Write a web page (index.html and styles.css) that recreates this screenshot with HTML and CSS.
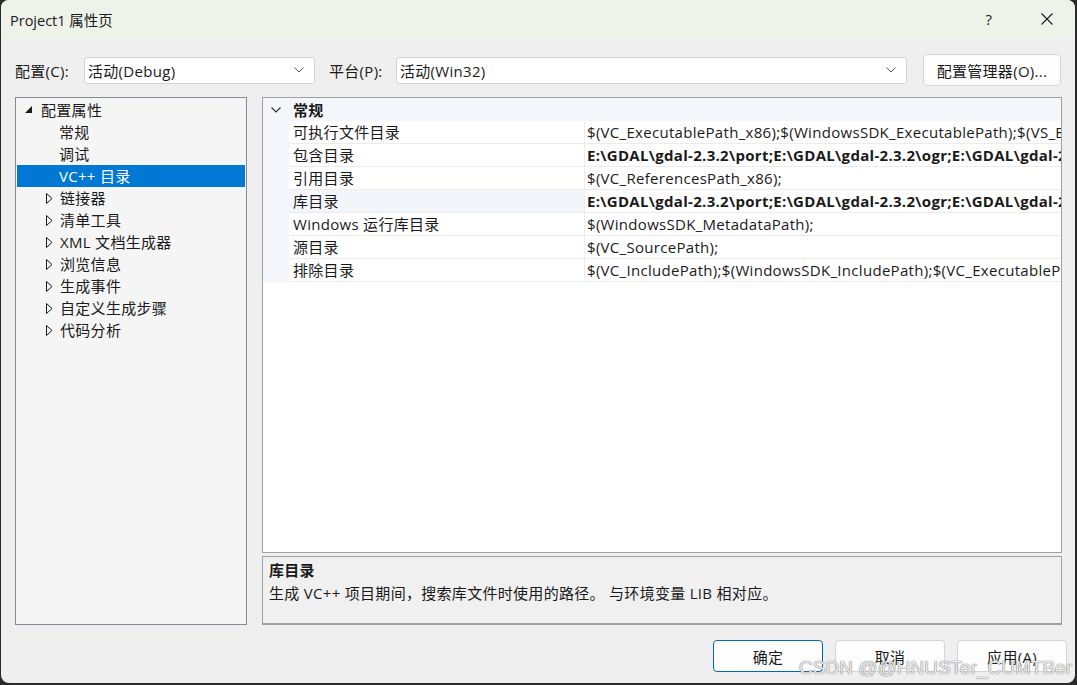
FILE: index.html
```html
<!DOCTYPE html>
<html>
<head>
    <title>Project1 属性页</title>
    <link rel="stylesheet" href="styles.css">
</head>
<body>
    <div class="window">
        <div class="titlebar">
            <span class="title">Project1 属性页</span>
            <span class="caption-btn help">?</span>
            <span class="caption-btn close">
                <svg width="12" height="12" viewBox="0 0 12 12"><path d="M0.5 0.5 L11.5 11.5 M11.5 0.5 L0.5 11.5" stroke="#1a1a1a" stroke-width="1.1" fill="none"/></svg>
            </span>
        </div>

        <div class="toolbar">
            <label class="config-label">配置(C):</label>
            <div class="combo combo-config">
                <span>活动(Debug)</span>
                <svg class="chevron" width="10" height="6" viewBox="0 0 10 6"><path d="M0.5 0.5 L5 5 L9.5 0.5" stroke="#555" stroke-width="1" fill="none"/></svg>
            </div>
            <label class="platform-label">平台(P):</label>
            <div class="combo combo-platform">
                <span>活动(Win32)</span>
                <svg class="chevron" width="10" height="6" viewBox="0 0 10 6"><path d="M0.5 0.5 L5 5 L9.5 0.5" stroke="#555" stroke-width="1" fill="none"/></svg>
            </div>
            <button class="manager-btn">配置管理器(O)...</button>
        </div>

        <div class="main">
            <div class="tree">
                <div class="tree-row root">
                    <svg class="expander" width="8" height="8" viewBox="0 0 8 8"><polygon points="7,0 7,7 0,7" fill="#1a1a1a"/></svg>
                    <span>配置属性</span>
                </div>
                <div class="tree-row leaf"><span>常规</span></div>
                <div class="tree-row leaf"><span>调试</span></div>
                <div class="tree-row leaf selected"><span>VC++ 目录</span></div>
                <div class="tree-row node">
                    <svg class="expander" width="7" height="11" viewBox="0 0 7 11"><polygon points="0.5,0.5 6,5.5 0.5,10.5" fill="none" stroke="#1a1a1a" stroke-width="1"/></svg>
                    <span>链接器</span>
                </div>
                <div class="tree-row node">
                    <svg class="expander" width="7" height="11" viewBox="0 0 7 11"><polygon points="0.5,0.5 6,5.5 0.5,10.5" fill="none" stroke="#1a1a1a" stroke-width="1"/></svg>
                    <span>清单工具</span>
                </div>
                <div class="tree-row node">
                    <svg class="expander" width="7" height="11" viewBox="0 0 7 11"><polygon points="0.5,0.5 6,5.5 0.5,10.5" fill="none" stroke="#1a1a1a" stroke-width="1"/></svg>
                    <span>XML 文档生成器</span>
                </div>
                <div class="tree-row node">
                    <svg class="expander" width="7" height="11" viewBox="0 0 7 11"><polygon points="0.5,0.5 6,5.5 0.5,10.5" fill="none" stroke="#1a1a1a" stroke-width="1"/></svg>
                    <span>浏览信息</span>
                </div>
                <div class="tree-row node">
                    <svg class="expander" width="7" height="11" viewBox="0 0 7 11"><polygon points="0.5,0.5 6,5.5 0.5,10.5" fill="none" stroke="#1a1a1a" stroke-width="1"/></svg>
                    <span>生成事件</span>
                </div>
                <div class="tree-row node">
                    <svg class="expander" width="7" height="11" viewBox="0 0 7 11"><polygon points="0.5,0.5 6,5.5 0.5,10.5" fill="none" stroke="#1a1a1a" stroke-width="1"/></svg>
                    <span>自定义生成步骤</span>
                </div>
                <div class="tree-row node">
                    <svg class="expander" width="7" height="11" viewBox="0 0 7 11"><polygon points="0.5,0.5 6,5.5 0.5,10.5" fill="none" stroke="#1a1a1a" stroke-width="1"/></svg>
                    <span>代码分析</span>
                </div>
            </div>

            <div class="right-pane">
                <div class="grid">
                    <div class="category-row">
                        <span class="gutter">
                            <svg width="10" height="6" viewBox="0 0 10 6"><path d="M0.5 0.5 L5 5 L9.5 0.5" stroke="#333" stroke-width="1.2" fill="none"/></svg>
                        </span>
                        <span class="category-name">常规</span>
                    </div>
                    <div class="prop-row">
                        <span class="gutter"></span>
                        <span class="name">可执行文件目录</span>
                        <span class="value">$(VC_ExecutablePath_x86);$(WindowsSDK_ExecutablePath);$(VS_ExecutablePath);$(MSBuild_ExecutablePath);$(SystemRoot)\SysWow64;$(FxCopDir);$(PATH);</span>
                    </div>
                    <div class="prop-row">
                        <span class="gutter"></span>
                        <span class="name">包含目录</span>
                        <span class="value bold">E:\GDAL\gdal-2.3.2\port;E:\GDAL\gdal-2.3.2\ogr;E:\GDAL\gdal-2.3.2\gcore;E:\GDAL\gdal-2.3.2\alg;$(IncludePath)</span>
                    </div>
                    <div class="prop-row">
                        <span class="gutter"></span>
                        <span class="name">引用目录</span>
                        <span class="value">$(VC_ReferencesPath_x86);</span>
                    </div>
                    <div class="prop-row selected">
                        <span class="gutter"></span>
                        <span class="name">库目录</span>
                        <span class="value bold">E:\GDAL\gdal-2.3.2\port;E:\GDAL\gdal-2.3.2\ogr;E:\GDAL\gdal-2.3.2\gcore;$(LibraryPath)</span>
                    </div>
                    <div class="prop-row">
                        <span class="gutter"></span>
                        <span class="name">Windows 运行库目录</span>
                        <span class="value">$(WindowsSDK_MetadataPath);</span>
                    </div>
                    <div class="prop-row">
                        <span class="gutter"></span>
                        <span class="name">源目录</span>
                        <span class="value">$(VC_SourcePath);</span>
                    </div>
                    <div class="prop-row">
                        <span class="gutter"></span>
                        <span class="name">排除目录</span>
                        <span class="value">$(VC_IncludePath);$(WindowsSDK_IncludePath);$(VC_ExecutablePath_x86);$(VC_LibraryPath_x86);</span>
                    </div>
                </div>
                <div class="desc">
                    <div class="desc-title">库目录</div>
                    <div class="desc-text">生成 VC++ 项目期间，搜索库文件时使用的路径。 与环境变量 LIB 相对应。</div>
                </div>
            </div>
        </div>

        <div class="footer">
            <button class="dlg-btn default">确定</button>
            <button class="dlg-btn">取消</button>
            <button class="dlg-btn">应用(A)</button>
        </div>

        <div class="watermark">CSDN @@HNUSTer_CUMTBer</div>
    </div>
</body>
</html>
```

FILE: styles.css
```css
html, body {
    margin: 0;
    padding: 0;
}
body {
    width: 1077px;
    height: 685px;
    background-color: #2b2b2b;
    font-family: "Open Sans", "Noto Sans CJK SC", sans-serif;
    font-size: 15px;
    letter-spacing: 0.3px;
    color: #1a1a1a;
    overflow: hidden;
}
.window {
    position: relative;
    margin: 0 2px 0 1px;
    height: 683px;
    background-color: #efefef;
    border-radius: 8px;
    overflow: hidden;
}
.titlebar {
    height: 38px;
    display: flex;
    align-items: center;
    background-color: #eef3e9;
    padding-left: 9px;
}
.title {
    font-size: 14.5px;
    letter-spacing: 0;
}
.caption-btn {
    width: 46px;
    height: 38px;
    display: flex;
    align-items: center;
    justify-content: center;
}
.help {
    margin-left: auto;
    font-size: 15px;
}
.close {
    margin-left: 12px;
    margin-right: 5px;
}

/* config row */
.toolbar {
    display: flex;
    align-items: center;
    height: 32px;
    margin-top: 16px;
    padding-left: 14px;
}
.config-label {
    width: 69px;
}
.platform-label {
    width: 67px;
    margin-left: 14px;
}
.combo {
    height: 27px;
    box-sizing: border-box;
    display: flex;
    align-items: center;
    justify-content: space-between;
    background-color: #fff;
    border: 1px solid #d2d2d2;
    border-radius: 3px;
    padding: 0 10px 0 3px;
}
.combo-config {
    width: 231px;
}
.combo-platform {
    width: 511px;
}
.manager-btn {
    margin-left: 16px;
    width: 138px;
    height: 32px;
    font-family: inherit;
    font-size: 15px;
    letter-spacing: inherit;
    color: #1a1a1a;
    background-color: #fdfdfd;
    border: 1px solid #d5d5d5;
    border-radius: 4px;
    padding: 0;
}

/* main area */
.main {
    display: flex;
    margin-top: 11px;
    padding-left: 14px;
    height: 528px;
}
.tree {
    width: 232px;
    box-sizing: border-box;
    border: 1px solid #868b95;
    background-color: #f5f5f5;
    padding: 1px;
}
.tree-row {
    height: 22px;
    line-height: 22px;
    display: flex;
    align-items: center;
    white-space: nowrap;
}
.tree-row.root {
    padding-left: 8px;
}
.tree-row.root .expander {
    margin-right: 8px;
}
.tree-row.leaf {
    padding-left: 42px;
}
.tree-row.node {
    padding-left: 29px;
}
.tree-row.node .expander {
    margin-right: 7px;
}
.tree-row.selected {
    background-color: #0078d4;
    color: #fff;
}
.right-pane {
    margin-left: 15px;
    width: 800px;
    display: flex;
    flex-direction: column;
}
.grid {
    height: 456px;
    box-sizing: border-box;
    border: 1px solid #a0a0a0;
    background-color: #fff;
    overflow: hidden;
}
.category-row {
    height: 23px;
    display: flex;
    align-items: center;
    background-color: #f3f6fa;
}
.gutter {
    width: 26px;
    flex-shrink: 0;
    height: 100%;
    display: flex;
    align-items: center;
    justify-content: center;
    background-color: #f3f6fa;
}
.category-name {
    font-weight: bold;
    padding-left: 4px;
}
.prop-row {
    height: 23px;
    line-height: 22px;
    display: flex;
    white-space: nowrap;
}
.prop-row .name {
    width: 296px;
    flex-shrink: 0;
    box-sizing: border-box;
    padding-left: 4px;
    border-right: 1px solid #ececec;
    border-bottom: 1px solid #ececec;
    overflow: hidden;
}
.prop-row .value {
    flex: 1;
    padding-left: 2px;
    border-bottom: 1px solid #ececec;
    overflow: hidden;
}
.prop-row .bold {
    font-weight: bold;
}
.prop-row.selected .name {
    background-color: #f2f5fa;
}
.desc {
    margin-top: 3px;
    height: 69px;
    box-sizing: border-box;
    border: 1px solid #a0a0a0;
    border-bottom-width: 2px;
    background-color: #f0f0f0;
    padding: 2px 6px;
    line-height: 23px;
}
.desc-title {
    font-weight: bold;
}

/* buttons */
.footer {
    display: flex;
    justify-content: flex-end;
    gap: 12px;
    margin-top: 15px;
    padding-right: 8px;
}
.dlg-btn {
    width: 110px;
    height: 32px;
    font-family: inherit;
    font-size: 15px;
    letter-spacing: inherit;
    color: #1a1a1a;
    background-color: #fdfdfd;
    border: 1px solid #d5d5d5;
    border-radius: 4px;
    padding: 0;
}
.dlg-btn.default {
    border: 1px solid #0067c0;
}
.watermark {
    position: absolute;
    right: 3px;
    bottom: 4px;
    font-family: "Liberation Sans", sans-serif;
    font-size: 19px;
    letter-spacing: 0;
    color: rgba(255, 255, 255, 0.85);
    text-shadow: 0 0 1px #777, 0 0 1px #777;
    pointer-events: none;
}
```
